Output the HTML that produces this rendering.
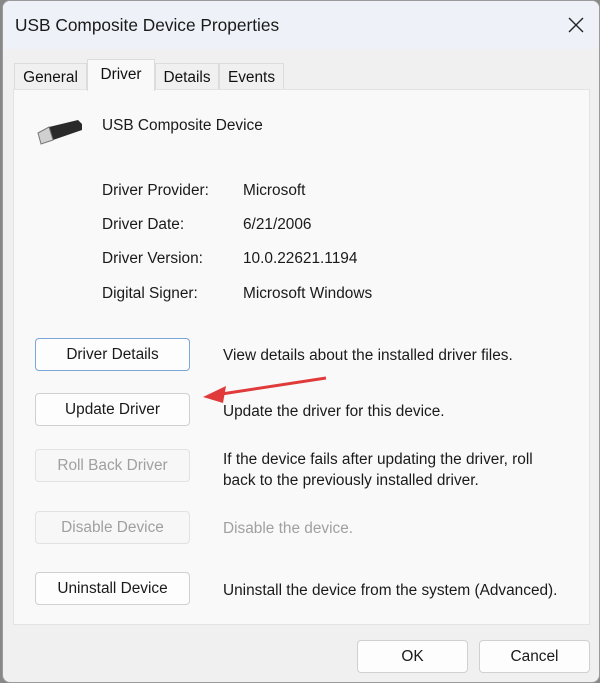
<!DOCTYPE html><html><head><style>
body{margin:0;width:600px;height:683px;background:#888;font-family:"Liberation Sans",sans-serif;position:relative;overflow:hidden}
.win{position:absolute;left:2px;top:0;width:596px;height:681px;background:#f0f0f0;border:1px solid #9a9a9a;border-radius:8px;overflow:hidden}
.title{height:48px;background:#eef2f8;position:relative}
.title span{position:absolute;left:12px;top:14px;font-size:17.3px;color:#1a1a1a}
.x{position:absolute;left:565px;top:16px}
.panel{position:absolute;left:10px;top:88px;width:575px;height:534px;background:#f9f9f9;border:1px solid #e3e3e3}
.tab{position:absolute;top:62px;height:26px;font-size:15.4px;color:#111;background:#f0f0f0;border:1px solid #dcdcdc;border-bottom:none;box-sizing:border-box;padding-top:5px;text-align:center}
.t{position:absolute;font-size:15.4px;color:#1a1a1a;white-space:nowrap}
.btn{position:absolute;left:32px;width:155px;height:33px;background:#fdfdfd;border:1px solid #d0d0d0;border-radius:4px;box-sizing:border-box;font-size:15.4px;text-align:center;line-height:31px;color:#1a1a1a}
.dis{color:#a0a0a0;background:#f7f7f7;border-color:#e2e2e2}
</style></head><body>
<div class="win">
<div class="title"><span>USB Composite Device Properties</span>
<svg class="x" width="16" height="16" viewBox="0 0 16 16"><path d="M1 1L15 15M15 1L1 15" stroke="#222" stroke-width="1.4"/></svg></div>
<div class="panel"></div>
<div class="tab" style="left:11px;width:73px">General</div>
<div class="tab" style="left:84px;width:68px;top:58px;height:32px;background:#f9f9f9;padding-top:6px">Driver</div>
<div class="tab" style="left:152px;width:64px">Details</div>
<div class="tab" style="left:216px;width:65px">Events</div>
<svg style="position:absolute;left:33px;top:114px" width="48" height="32" viewBox="0 0 48 32"><path d="M13 12L42 5L46 9L46 15L17 25Z" fill="#2a2a2a"/><path d="M2 18L13 12L17 25L5 29Z" fill="#d0d0d0" stroke="#777" stroke-width="1"/></svg>
<div class="t" style="left:99px;top:116px">USB Composite Device</div>
<div class="t" style="left:99px;top:181px">Driver Provider:</div><div class="t" style="left:240px;top:181px">Microsoft</div>
<div class="t" style="left:99px;top:215px">Driver Date:</div><div class="t" style="left:240px;top:215px">6/21/2006</div>
<div class="t" style="left:99px;top:249px">Driver Version:</div><div class="t" style="left:240px;top:249px">10.0.22621.1194</div>
<div class="t" style="left:99px;top:284px">Digital Signer:</div><div class="t" style="left:240px;top:284px">Microsoft Windows</div>
<div class="btn" style="top:337px;border-color:#7aa6d8">Driver Details</div>
<div class="t" style="left:220px;top:346px">View details about the installed driver files.</div>
<div class="btn" style="top:392px">Update Driver</div>
<div class="t" style="left:220px;top:402px">Update the driver for this device.</div>
<div class="btn dis" style="top:448px">Roll Back Driver</div>
<div class="t" style="left:220px;top:448px;line-height:21px">If the device fails after updating the driver, roll<br>back to the previously installed driver.</div>
<div class="btn dis" style="top:510px">Disable Device</div>
<div class="t" style="left:220px;top:519px;color:#a0a0a0">Disable the device.</div>
<div class="btn" style="top:571px">Uninstall Device</div>
<div class="t" style="left:220px;top:581px">Uninstall the device from the system (Advanced).</div>
<div class="btn" style="left:354px;top:639px;width:111px;height:33px">OK</div>
<div class="btn" style="left:476px;top:639px;width:111px;height:33px">Cancel</div>
</div>
<svg style="position:absolute;left:0;top:0" width="600" height="683"><path d="M326 378L215 395" stroke="#e03a3a" stroke-width="3"/><path d="M203 397L226 386L223 403Z" fill="#e03a3a"/></svg>
</body></html>
